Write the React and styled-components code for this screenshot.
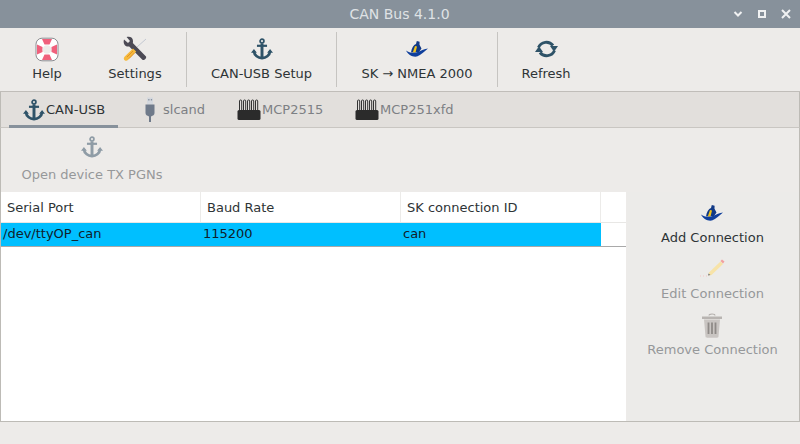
import React from "react";
import styled, { createGlobalStyle } from "styled-components";

const GlobalStyle = createGlobalStyle`
  html, body {
    margin: 0;
    padding: 0;
    width: 800px;
    height: 444px;
    overflow: hidden;
    background: #edebe9;
    font-family: "DejaVu Sans", sans-serif;
    font-size: 13px;
  }
`;

const Window = styled.div`
  width: 800px;
  height: 444px;
  display: flex;
  flex-direction: column;
  background: #edebe9;
`;

const TitleBar = styled.header`
  height: 28px;
  flex: none;
  display: flex;
  align-items: center;
  justify-content: center;
  padding-right: 1px;
  background: #87919b;
  color: #dfe2e5;
  font-size: 14px;
  position: relative;
`;

const WindowButtons = styled.div`
  position: absolute;
  right: 9px;
  top: 9px;
  display: flex;
  gap: 14px;
`;

const Toolbar = styled.div`
  height: 63px;
  flex: none;
  display: flex;
  padding-left: 3px;
  border-bottom: 1px solid #c0bdb9;
`;

const Tool = styled.div`
  width: ${(p) => p.$width}px;
  height: 55px;
  margin-top: 4px;
  flex: none;
  display: flex;
  flex-direction: column;
  align-items: center;
  color: #2e3436;
  border-right: ${(p) => (p.$divider ? "1px solid #c6c4c1" : "0")};
`;

const ToolIcon = styled.div`
  height: 28px;
  margin-top: 3px;
  display: flex;
  align-items: center;
  justify-content: center;
`;

const ToolLabel = styled.span`
  margin-top: 3px;
  line-height: 16px;
  white-space: nowrap;
`;

const Separator = styled.div`
  width: 8px;
  height: 55px;
  margin-top: 4px;
  flex: none;
  box-sizing: border-box;
  border-right: 1px solid #c6c4c1;
`;

const TabBar = styled.div`
  height: 36px;
  flex: none;
  display: flex;
  padding-left: 8px;
  background: #e2dfdc;
  border-bottom: 1px solid #c9c6c2;
  border-left: 1px solid #bdbbb6;
  border-right: 1px solid #bdbbb6;
  box-sizing: border-box;
`;

const Tab = styled.div`
  width: ${(p) => p.$width}px;
  height: 36px;
  flex: none;
  box-sizing: border-box;
  display: flex;
  align-items: center;
  padding: 2px 0 0 ${(p) => p.$pad}px;
  gap: ${(p) => p.$gap}px;
  color: ${(p) => (p.$active ? "#2e3436" : "#7d8084")};
  border-bottom: 3px solid ${(p) => (p.$active ? "#87919b" : "transparent")};
`;

const Page = styled.div`
  flex: 1;
  min-height: 0;
  display: flex;
  flex-direction: column;
  border-left: 1px solid #bdbbb6;
  border-right: 1px solid #bdbbb6;
  border-bottom: 1px solid #bdbbb6;
  margin-bottom: 22px;
`;

const PageTools = styled.div`
  height: 64px;
  flex: none;
  display: flex;
`;

const PageTool = styled.div`
  width: 162px;
  margin-left: 10px;
  padding-top: 8px;
  display: flex;
  flex-direction: column;
  align-items: center;
  color: #96989a;
`;

const PageToolLabel = styled.span`
  margin-top: 9px;
  line-height: 16px;
`;

const Body = styled.div`
  flex: 1;
  min-height: 0;
  display: flex;
`;

const Grid = styled.div`
  width: 625px;
  flex: none;
  background: #fff;
  margin-right: 1px;
`;

const HeaderRow = styled.div`
  display: flex;
  height: 31px;
  box-sizing: border-box;
  border-bottom: 1px solid #e8e7e5;
`;

const HeaderCell = styled.div`
  width: ${(p) => p.$width}px;
  flex: none;
  box-sizing: border-box;
  padding: 1px 0 0 6px;
  line-height: 30px;
  color: #2e3436;
  border-right: ${(p) => (p.$last ? "0" : "1px solid #ecebe9")};
`;

const DataRow = styled.div`
  display: flex;
  height: 24px;
  box-sizing: border-box;
  border-bottom: 1px solid #a9a9a9;
`;

const DataCell = styled.div`
  width: ${(p) => p.$width}px;
  flex: none;
  box-sizing: border-box;
  padding-left: ${(p) => p.$pad}px;
  line-height: 22px;
  background: ${(p) => (p.$blank ? "#fff" : "#00bfff")};
  color: #10202a;
`;

const SidePanel = styled.aside`
  flex: 1;
  display: flex;
  flex-direction: column;
  align-items: center;
  background: #ecebe9;
  padding: 11px 1px 0 0;
`;

const SideAction = styled.div`
  height: 56px;
  display: flex;
  flex-direction: column;
  align-items: center;
  color: ${(p) => (p.$disabled ? "#96989a" : "#2e3436")};
`;

const SideIcon = styled.div`
  height: 26px;
  box-sizing: border-box;
  padding-bottom: 6px;
  display: flex;
  align-items: center;
  justify-content: center;
`;

const SideLabel = styled.span`
  margin-top: 1px;
  line-height: 16px;
  white-space: nowrap;
`;

const Anchor = ({ color = "#2f5368" }) => (
  <svg width="22" height="22" viewBox="0 0 24 24">
    <circle cx="12" cy="3.4" r="2.1" fill="none" stroke={color} strokeWidth="1.9" />
    <path d="M6.5 8.500h11" stroke={color} strokeWidth="2.400" fill="none" />
    <path d="M12 6v15" stroke={color} strokeWidth="3.200" fill="none" />
    <path
      d="M3.2 14.500C3.600 19 8 21.500 12 22c4-.5 8.400-3 8.800-7.500"
      stroke={color}
      strokeWidth="3"
      fill="none"
    />
    <path d="M0 16l3.200-4 3.200 4zM17.600 16l3.200-4 3.200 4z" fill={color} />
  </svg>
);

const LifeBuoy = () => (
  <svg width="24" height="25" viewBox="0 0 24 25">
    <rect x="1" y="1.2" width="22" height="22.6" rx="6" fill="#fff" stroke="#8b8b90" strokeWidth="1" />
    <path d="M7 2h10l-2.5 5.5h-5z" fill="#f0607c" />
    <path d="M7 23h10l-2.5-5.500h-5z" fill="#f0607c" />
    <path d="M2 7.500v10l5.500-2.500v-5z" fill="#f0607c" />
    <path d="M22 7.500v10l-5.500-2.500v-5z" fill="#f0607c" />
    <circle cx="12" cy="12.5" r="4.3" fill="#edebe9" />
  </svg>
);

const Tools = () => (
  <svg width="26" height="26" viewBox="0 0 26 26">
    <path d="M15 11l9-8" stroke="#c3c8d2" strokeWidth="1" fill="none" />
    <path
      d="M2 3.500l4 3.500 2-2-3.400-4C8 0 11 1.500 11 5c0 1 0 1.500-.2 2L24 20.500c1 1.500-2 4.500-3.600 3.300L7.200 10.400C3.800 11.400.6 8 2 3.500z"
      fill="#4c4a55"
    />
    <path d="M3 24.500c-1.500-1-1.500-2.500-.5-3.800L11 12.500l3.200 3-8 8.200c-1 1-2 1.400-3.200.8z" fill="#f6b93b" />
    <path d="M5 21l6-6M7 22.500l5.500-5.500" stroke="#e0912a" strokeWidth="1" fill="none" />
  </svg>
);

const Ship = () => (
  <svg width="22" height="16" viewBox="0 0 22 16">
    <path d="M5 11.500C5.500 7 7.500 4 10 3l.8-3 2.800.8-.1 3 2 3.700-2.500 3.500z" fill="#123a86" />
    <path d="M6.800 11.500L9 5l2 .5-1.500 6z" fill="#f3c419" />
    <path d="M0 9.500c3.500 2.500 8 3 12.500 1.300 3-1.100 6-3 9.500-3.300-3.500 3-7 6.500-11 8-4.500.8-9-1.800-11-6z" fill="#0f3f9c" />
  </svg>
);

const Refresh = () => (
  <svg width="23" height="20" viewBox="0 0 23 20">
    <path d="M3.500 8.500A8.500 8.500 0 0 1 18 6.500" stroke="#2f5368" strokeWidth="3" fill="none" />
    <path d="M15 7h8l-4 5.800z" fill="#2f5368" />
    <path d="M19.500 11.500A8.500 8.500 0 0 1 5 13.500" stroke="#2f5368" strokeWidth="3" fill="none" />
    <path d="M0 13h8L4 7.200z" fill="#2f5368" />
  </svg>
);

const UsbPlug = () => (
  <svg width="12" height="26" viewBox="0 0 12 26">
    <rect x="3" y="0.500" width="6" height="7" fill="#d4d8de" />
    <rect x="4.200" y="2" width="1.300" height="1.500" fill="#8a93a0" />
    <rect x="6.800" y="2" width="1.300" height="1.500" fill="#8a93a0" />
    <path d="M1.500 7.500h9V16c0 2-1.500 2.500-3.500 3.500V25H5v-5.500C3 18.500 1.500 18 1.500 16z" fill="#6f7a8a" />
  </svg>
);

const Chip = () => (
  <svg width="24" height="22" viewBox="0 0 24 22">
    {[2.5, 6.5, 10.5, 14.5, 18.5].map((x) => (
      <rect key={x} x={x} y="1" width="2.200" height="12" rx="1" fill="none" stroke="#333" strokeWidth="1" />
    ))}
    <rect x="0.500" y="11" width="23" height="10" rx="1.500" fill="#2b2b2b" />
  </svg>
);

const Pencil = () => (
  <svg width="25" height="20" viewBox="0 0 25 20">
    <path d="M9 13.500L20.500 2.500 23 5 11.500 16l-3 .5z" fill="#f7e3a8" />
    <path d="M20.500 2l1.500-1.500 2.500 2L23 4.500z" fill="#f2a0a0" />
    <path d="M8.500 14.500l2 1.500-2.500.5z" fill="#777" />
    <path d="M0 17h7" stroke="#f3c7c7" strokeWidth="1" strokeDasharray="1 2" />
  </svg>
);

const Trash = () => (
  <svg width="22" height="25" viewBox="0 0 22 25">
    <path d="M8 2.500c0-2 6-2 6 0" stroke="#b3afac" strokeWidth="1.200" fill="none" />
    <path d="M1 3.500h20v2.500H1z" fill="#b8b4b1" />
    <path d="M3 6.500h16l-1.500 17c0 .8-.8 1.200-1.500 1.200H6c-.8 0-1.500-.4-1.500-1.200z" fill="#c9c5c2" />
    <path d="M7.500 9.500v11.500M11 9.500v11.500M14.500 9.500v11.500" stroke="#8f8b88" strokeWidth="1.800" />
  </svg>
);

const MinimizeIcon = () => (
  <svg width="10" height="10" viewBox="0 0 10 10">
    <path d="M1.500 3L5 6.500 8.500 3" stroke="#f0f1f2" strokeWidth="2" fill="none" />
  </svg>
);

const MaximizeIcon = () => (
  <svg width="10" height="10" viewBox="0 0 10 10">
    <rect x="2" y="2" width="6" height="6" stroke="#f0f1f2" strokeWidth="2" fill="none" />
  </svg>
);

const CloseIcon = () => (
  <svg width="10" height="10" viewBox="0 0 10 10">
    <path d="M1 1l8 8M9 1L1 9" stroke="#f0f1f2" strokeWidth="2" fill="none" />
  </svg>
);

const App = () => (
  <Window>
    <GlobalStyle />
    <TitleBar>
      CAN Bus 4.1.0
      <WindowButtons>
        <MinimizeIcon />
        <MaximizeIcon />
        <CloseIcon />
      </WindowButtons>
    </TitleBar>

    <Toolbar>
      <Tool $width={88}>
        <ToolIcon><LifeBuoy /></ToolIcon>
        <ToolLabel>Help</ToolLabel>
      </Tool>
      <Tool $width={88}>
        <ToolIcon><Tools /></ToolIcon>
        <ToolLabel>Settings</ToolLabel>
      </Tool>
      <Separator />
      <Tool $width={149} $divider>
        <ToolIcon><Anchor /></ToolIcon>
        <ToolLabel>CAN-USB Setup</ToolLabel>
      </Tool>
      <Tool $width={160} $divider>
        <ToolIcon><Ship /></ToolIcon>
        <ToolLabel>SK → NMEA 2000</ToolLabel>
      </Tool>
      <Tool $width={96}>
        <ToolIcon><Refresh /></ToolIcon>
        <ToolLabel>Refresh</ToolLabel>
      </Tool>
    </Toolbar>

    <TabBar>
      <Tab $active $width={109} $pad={14} $gap={1}>
        <Anchor />
        CAN-USB
      </Tab>
      <Tab $width={109} $pad={26} $gap={7}>
        <UsbPlug />
        slcand
      </Tab>
      <Tab $width={118} $pad={10} $gap={1}>
        <Chip />
        MCP2515
      </Tab>
      <Tab $width={118} $pad={10} $gap={1}>
        <Chip />
        MCP251xfd
      </Tab>
    </TabBar>

    <Page>
      <PageTools>
        <PageTool>
          <Anchor color="#8f9ca6" />
          <PageToolLabel>Open device TX PGNs</PageToolLabel>
        </PageTool>
      </PageTools>
      <Body>
        <Grid>
          <HeaderRow>
            <HeaderCell $width={200}>Serial Port</HeaderCell>
            <HeaderCell $width={200}>Baud Rate</HeaderCell>
            <HeaderCell $width={200}>SK connection ID</HeaderCell>
            <HeaderCell $width={25} $last />
          </HeaderRow>
          <DataRow>
            <DataCell $width={200} $pad={2}>/dev/ttyOP_can</DataCell>
            <DataCell $width={200} $pad={2}>115200</DataCell>
            <DataCell $width={200} $pad={2}>can</DataCell>
            <DataCell $width={25} $blank />
          </DataRow>
        </Grid>
        <SidePanel>
          <SideAction>
            <SideIcon><Ship /></SideIcon>
            <SideLabel>Add Connection</SideLabel>
          </SideAction>
          <SideAction $disabled>
            <SideIcon><Pencil /></SideIcon>
            <SideLabel>Edit Connection</SideLabel>
          </SideAction>
          <SideAction $disabled>
            <SideIcon><Trash /></SideIcon>
            <SideLabel>Remove Connection</SideLabel>
          </SideAction>
        </SidePanel>
      </Body>
    </Page>
  </Window>
);

export default App;
